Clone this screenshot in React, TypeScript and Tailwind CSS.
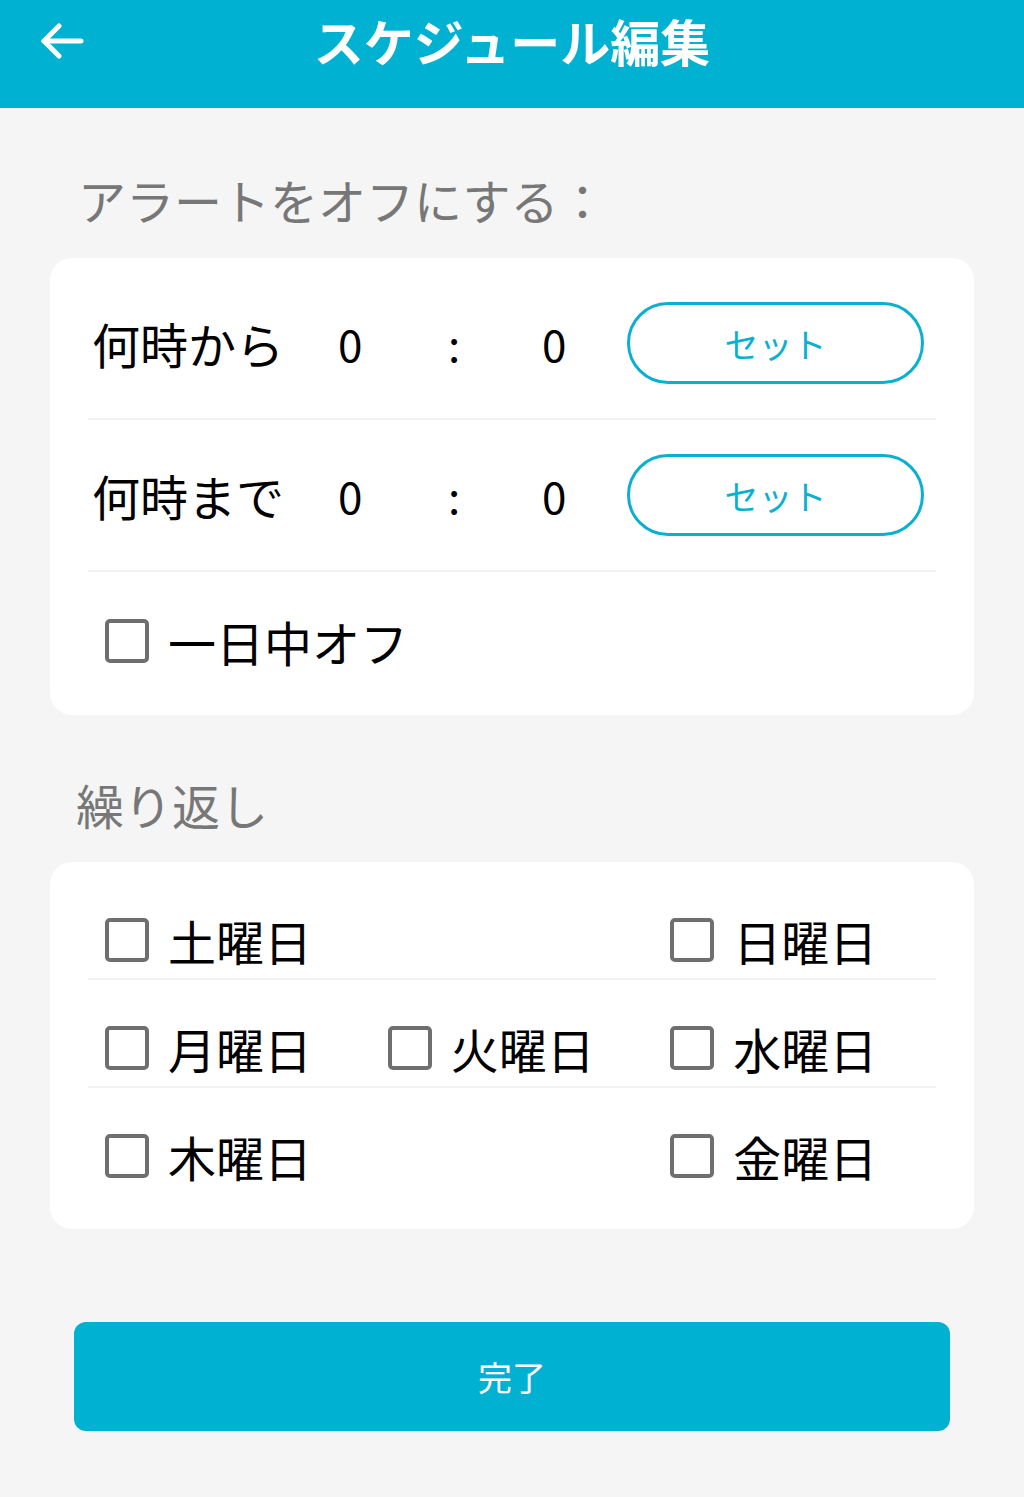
const font = { fontFamily: '"Noto Sans CJK JP", "Noto Sans", sans-serif' };

function Box() {
  return <span className="block h-[44px] w-[44px] shrink-0 rounded-[5px] border-[4px] border-[#6f6f6f] bg-white" />;
}

function Check({ label }: { label: string }) {
  return (
    <div className="flex items-center pl-[17px]">
      <Box />
      <span className="ml-[19px] text-[48px] leading-[48px] text-black">{label}</span>
    </div>
  );
}

function TimeRow({ label, divider }: { label: string; divider?: boolean }) {
  return (
    <div className={`flex h-[152px] items-center ${divider ? 'border-b-2 border-[#f2f2f2]' : ''}`}>
      <span className="w-[250px] pl-[4px] text-[48px] leading-[48px] text-black">{label}</span>
      <span className="w-[104px] text-[44px] leading-[48px] text-black">0</span>
      <span className="w-[100px] pl-[6px] text-[44px] leading-[48px] text-black">:</span>
      <span className="w-[85px] text-[44px] leading-[48px] text-black">0</span>
      <button className="flex h-[82px] w-[297px] items-center justify-center rounded-full border-[3px] border-[#0bb0d0] text-[34px] text-[#0bb0d0]">
        セット
      </button>
    </div>
  );
}

export default function App() {
  return (
    <div className="min-h-[1497px] w-full bg-[#f5f5f5]" style={font}>
      <header className="flex h-[108px] items-center bg-[#00b1d2] px-[40px]">
        <svg width="44" height="36" viewBox="0 0 44 36" className="-mt-[26px] shrink-0" fill="none" stroke="white" strokeWidth="5" strokeLinecap="round" strokeLinejoin="round">
          <path d="M41 18H4" />
          <path d="M19 3 4 18l15 15" />
        </svg>
        <h1 className="-mt-[28px] flex-1 text-center text-[50px] font-bold leading-[50px] text-white">スケジュール編集</h1>
        <span className="w-[44px] shrink-0" />
      </header>

      <p className="ml-[78px] mt-[67px] text-[48px] leading-[48px] text-[#777]">アラートをオフにする：</p>

      <section className="mx-[50px] mt-[35px] rounded-[22px] bg-white px-[38px] pt-[10px]">
        <TimeRow label="何時から" divider />
        <TimeRow label="何時まで" divider />
        <div className="h-[143px] pt-[45px]">
          <Check label="一日中オフ" />
        </div>
      </section>

      <p className="ml-[76px] mt-[65px] text-[48px] leading-[48px] text-[#777]">繰り返し</p>

      <section className="mx-[50px] mt-[34px] rounded-[22px] bg-white px-[38px] pb-[33px] pt-[10px]">
        <div className="grid h-[108px] grid-cols-3 items-start border-b-2 border-[#f2f2f2] pt-[44px]">
          <Check label="土曜日" />
          <div />
          <Check label="日曜日" />
        </div>
        <div className="grid h-[108px] grid-cols-3 items-start border-b-2 border-[#f2f2f2] pt-[44px]">
          <Check label="月曜日" />
          <Check label="火曜日" />
          <Check label="水曜日" />
        </div>
        <div className="grid h-[108px] grid-cols-3 items-start pt-[44px]">
          <Check label="木曜日" />
          <div />
          <Check label="金曜日" />
        </div>
      </section>

      <div className="mx-[74px] mt-[93px]">
        <button className="flex h-[109px] w-full items-center justify-center rounded-[12px] bg-[#00b1d2] text-[34px] text-white">
          完了
        </button>
      </div>
    </div>
  );
}
